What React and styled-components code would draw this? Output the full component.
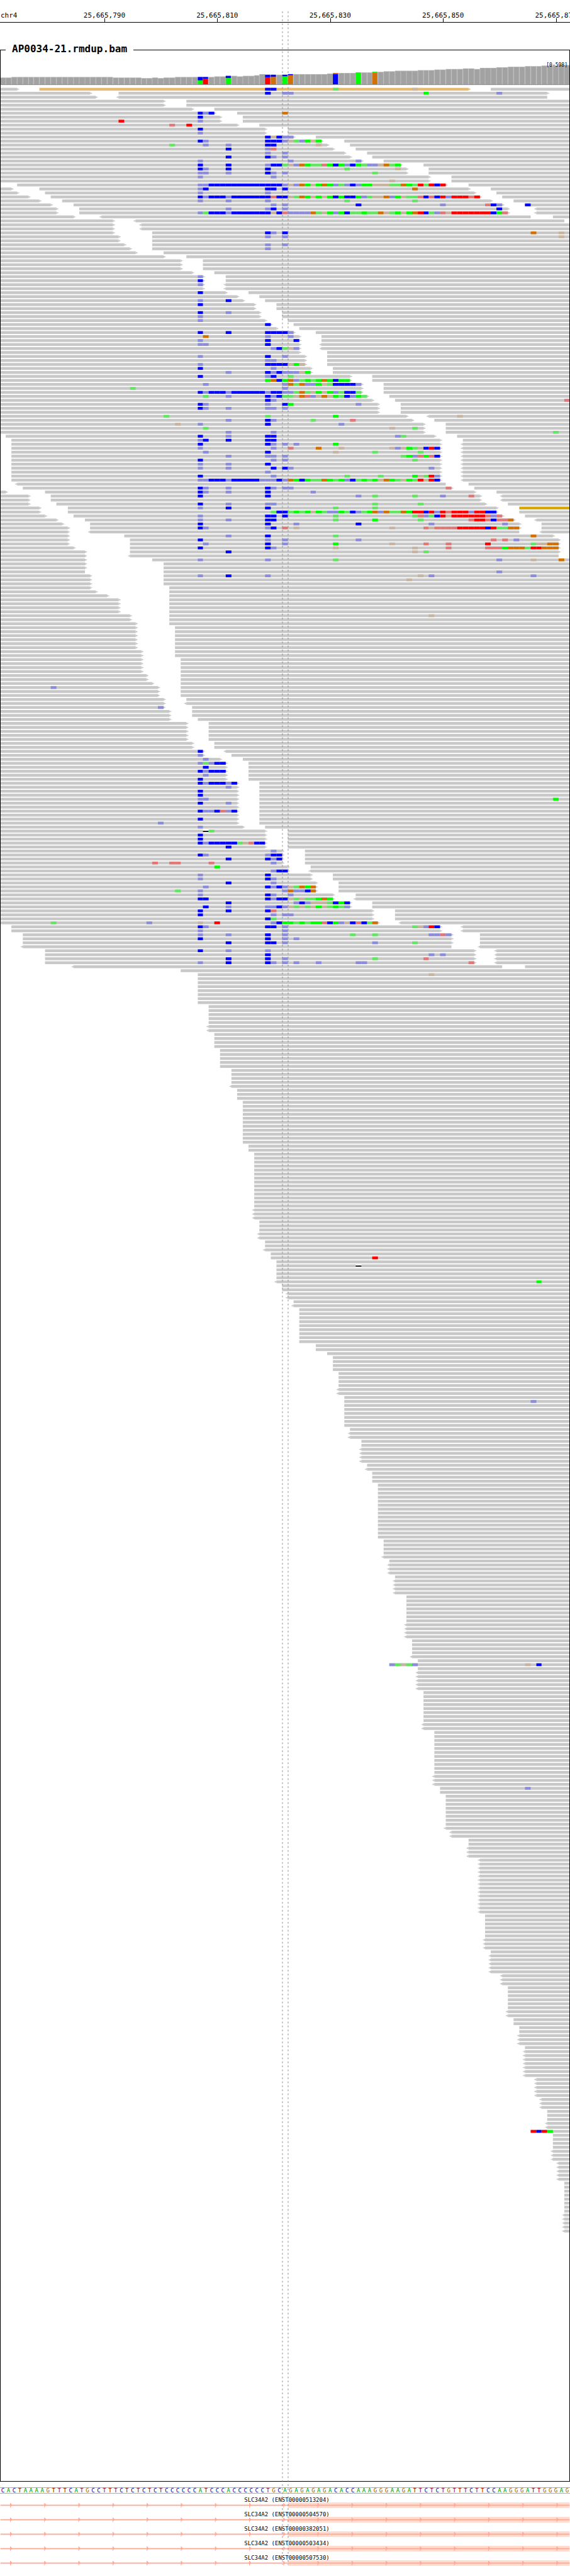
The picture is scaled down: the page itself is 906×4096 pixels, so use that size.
import React from "react";
import styled, { createGlobalStyle } from "styled-components";

const BASES = 101;
const colX = (c) => Math.round((c * 1000) / BASES);

const INK = {
  A: "#009600",
  C: "#000096",
  G: "#a05a00",
  T: "#960000",
};

const MISMATCH = {
  B: "#0000ff",
  b: "#8c8cdc",
  G: "#00ff00",
  g: "#64e664",
  R: "#ff0000",
  r: "#e07878",
  O: "#d27005",
  o: "#c8b4a0",
};

const SEQUENCE =
  "CACTAAAAGTTTCATGCCTTTCTCTCTCTCCCCCCATCCCACCCCCCTGCA" +
  "GAGAGAGACACCAAAGGGAAGATTCTCTGTTTCTTCCAAGGGATTGGGAG";

const TICKS = ["25,665,790", "25,665,810", "25,665,830", "25,665,850", "25,665,870"];

const TRANSCRIPTS = [
  "ENST00000513204",
  "ENST00000504570",
  "ENST00000382051",
  "ENST00000503434",
  "ENST00000507530",
];

/* [number of columns, top of the bar]; the baseline is at 148 */
const COVERAGE = [
  [2, 136], [18, 135], [5, 136], [2, 137], [1, 136], [1, 137], [2, 136], [7, 135],
  [2, 134], [2, 133], [1, 134], [2, 133], [1, 132], [1, 130], [4, 131], [7, 130],
  [1, 129], [4, 128], [3, 127], [2, 126], [2, 125], [4, 124], [3, 123], [2, 122],
  [3, 121], [2, 120], [1, 121], [3, 119], [2, 118], [3, 117], [3, 116], [3, 115],
  [2, 114],
].flatMap(([n, top]) => Array(n).fill(top));

/* column: [upper colour, split, lower colour] */
const VARIANTS = {
  35: ["B", 141, "G"],
  36: ["B", 138, "R"],
  40: ["B", 137, "G"],
  47: ["B", 136, "R"],
  48: ["B", 135, "O"],
  50: ["B", 134, "G"],
  51: ["B", 132, "O"],
  59: ["O", 130, "B"],
  63: ["G", 128, "G"],
  66: ["G", 128, "O"],
};

/*
 * One line for each row of the pileup.
 *   xN        the row is repeated N times
 *   <a-b>     a read from column a to column b, with its strand arrows
 *   P, Y      in front of a read: its insert-size colour
 *   35Bb      mismatches from column 35 on (X is a deletion)
 */
const PILEUP = `
0-3> P7-83> 87- 47BB 59g 73o
0-16> 21-97> 47B 50bb 75G 88b
0-17> <21-97
x2 0-29> 33-
0-34> 38-
0-38> 42- 35BbB 50O
0-39> 43- 35B
0-39> 43- 21R 35b
0-42> 46- 30r 33R
0-47> 51- 35B
0-47> 51- 35b
0-52> 56- 47BoBbb
0-57> 61- 35Bb 47BBBbogbGoG
0-58> 62- 30g 36b 40b 47BB 56o
0-59> 63- 40B 47br
0-61> 65- 47b 50b
0-62> 66- 40B 47Bb 50b
0-64> 68- 35b 51b 63b
0-71> 75- 35B 40B 47bBBgobOGggrGBGbBGgbboOgG
0-72> 76- 35Bb 40B 47B 61g 70o
0-72> 76- 35bb 40b 47Bb 50b 66g
0-76> 80- 35b 48b
0-76> 80- 69o
3-79> 83- 35bbBBBBBBBBBBBBB 50bobOGoGOGbgbBbGGoooggOGgRgRBR
0-2> 7-83> 87- 35bB 47BB 50B 73O
0-3> 8-84> 88- 35b 47b
0-5> 9-85> 89- 35BbBBBb 41BBBBBBBrBB 51ogOGoGoGBGBBGbgooObGoggrBrBRbRRRrR
0-7> 11-87> 91- 35b 40b 47b 61g 73g
0-9> 13-89> 93- 48b 50b 63B 78b 86rBb 93B
0-10> 14-90> <95- 40b 47bB 50b 88B
0-10> 14-90> <95- 35bgBBBb 41BBBBBBBoBr 51bbbbOgoGbGBggGggOogGoGORBgbro 80RRRRRRRBGr
0-13> <18-94 98-
0-20> <24-100
x2 0-20> <25-
0-20> 27- 47Bb 50B 94O 99o
0-21> 27- 47b 50b 99o
0-21> 27-
0-22> 27- 47b 50b
0-23> 27- 47b
0-24> 29-
0-29> 33-
x3 0-32> 36-
0-34> 38-
0-36> 40- 35b
0-36> 40- 35B
0-36> <40- 35b
0-36> <40-
0-40> 44- 35B
0-42> 46-
0-43> 47- 35b 40B
0-45> 49- 35B
0-45> 49-
0-46> 50- 35B 40b
0-46> 50- 35b
0-47> 51- 35b
0-48> 52- 47B
0-49> 53-
0-52> 56- 35B 40B 47BBBBb
0-53> 57- 36O 47b 51b
0-53> 57- 35b 47B 52B
0-53> <57- 35bb 47B
0-53> <57- 48bBgob
0-53> 58-
0-54> 58- 35b 47B 50b
0-54> 58- 47bb
0-54> 58- 35b 47BBBBoGo
0-55> 59- 35B 48b
0-55> 59- 40b 47BbBbbboG
0-62> 66- 35B 47bB 51g
0-62> 66- 47GOBGObgGgGOGBGG
0-64> 68- 36b 50bOgObbGogBBBBb
0-64> 68- 23g 50b
0-64> 68- 35BbBBBb 41BBBBBBbBBbbgOgoGoGbgBBg
0-65> 69- 36g 40b 47BbBggoOrboOoGgBbGg
0-66> 70- 47Bb 100r
0-67> 71- 35Bb 47b 50BG 63b
0-67> 71- 35Bb 40b 47bb 50b
0-67> 71-
0-72> <76- 29g 47g 59G 81o
0-73> 77- 40b 47Bb 55g 62r
0-75> 79- 31o 35b 47B 60b
0-75> 79- 36g 69o 73g
0-75> 79- 40b 48b 98g
1-77> 81- 35B 40b 47BB 70bg
2-78> 82- 35bB 40B 47BB
2-78> <82- 35B 47Bb 50b 52b 59G
2-78> <82- 35b 48b 51r 56O 60o 69oboGgoBRB
2-78> <82- 36b 47B 59o 66g 74g
2-78> <82- 40b 47bb 50b 71gGbrGrB
2-78> <82- 35B 48b 50b 73g
2-78> <82- 35b 40b 47B
2-78> <82- 35b 40b 48B 50Bb 76b
2-78> <82- 47b
2-78> <82- 35B 48b 61g 67g 73GogRb
2-78> <82- 35bbBBBb 41BBBBBbbbBbOGBGggOGgGbBgGgGoOGgoGgRoRB
<3-79 83-
4-80> 84- 35Bb 40b 47Bb 50bb 79r
0-1> 8-84> 88- 35Bb 40b 47B 55b
0-5> 9-85> <89- 35B 47B 63b 66g 73g 78b 83r
0-5> 9-85> <89-
0-5> 10-86> 90- 35B 40b 47bb 66g 74g
0-7> 12-88> Y92- 35b 40B 47B 59g 66g
0-7> 12-88> 92- 48gBB 51gGgGoGgbbGgBbgGObOggOGRRBRbRrRRRbRRBB
0-8> 13-89> 93- 35b 47BB 50B 59g 73grbgBRoRRRRRRrbr
0-10> 15-91> <95- 35b 40b 47BB 59g 66G 74g 83rRRrBrrO
0-11> 16-92> 96- 35B 47B 52b 63B 76b 89b
0-12> 16-92> 96- 35Bb 47bB 50r 52o 69o 75rorrrrRRRRRBRggOO
0-12> <16-92 <96-
0-12> 22-98> 40b 47B 59g 94O
0-12> 23-99> 35B 47b 50b 63b 87r 89r 91b
0-12> 23-99> 36b 47B 50b 59G 69o 75r 79r 86R 94gooOO
0-13> 23-99> 35B 47Bb 59o 73o 79r 86rrrGOOOgRROOO
0-15> 23-99> 40B 73o 75g
0-15> <23-99
0-15> 27- 35b 47b 59g 88b 94o 99O
x2 0-15> 29-
0-15 29- 88b
0-16> 29- 35b 40B 47b 74o 76b 94b
0-16> 29- 72o
0-16> 29-
0-16> 30-
0-17> 30-
0-19> 30-
x4 0-21> 30-
0-23> 30- 76o
0-23> 30-
0-24> 30-
x6 0-24> 31-
x2 0-25> 31-
x4 0-25> 32-
x2 0-26> 32-
0-27> 32-
0-28> 32- 9b
x2 0-28> 32-
0-29> 33-
0-29> <33-
0-29> 34- 28b
x2 0-30> 34-
0-30> 35-
x5 0-33> 37-
x2 0-34> 38-
0-36> <40- 35B
0-36> 41- 35b
0-39> 43- 36b
0-40> 44- 35bgbBB
0-40> 44- 36B
0-40> 44- 35BbBBB
0-40> 44- 36b
0-40> 44- 35B
0-42> 46- 35BbBBBbB
0-42> 46- 40b
x2 0-42> 46- 35B
0-42> 46- 35bb 98G
0-42> 46- 35B 40b
0-42> 46-
0-42> 46- 35BbbBrbB
0-42> 46-
0-42> 46- 35B
0-42> 46- 28b
0-43> 47- 35b
0-47> 51- 36Xg
x2 0-47> 51- 35B
0-47> 51- 35BbBBBBBgorBB
0-47> 51- 40B
0-50> 54- 48b
0-50> 54- 35Bb 47bBB
0-50> 54- 40B 47BbB
0-50> 54- 27r 30rr 37r 48b
0-51> 55- 38G
0-51> <55- 48bBB
0-55> 59- 35b 47B
0-55> 59- 35b 47Bb
0-56> 60- 40B 48b
0-56> 60- 36b 47BbBbogOGO
0-56> 60- 31g 35b 50bObbBO
0-59> 63- 35b 47Bb 51b
0-59> <63- 35BB 47BbBBogoggGOG
0-62> 66- 40B 52bBbooogBGB
0-62> 66- 36B 40b 47bbBbogogoGogGgb
0-66> 70- 35B 40B 47Br
0-66> 70- 35B 48b 50bb
0-66> 70- 47Bg
0-67> <71- 9g 26b 35o 38R 48bBGGgGgGGrBGboBrBgO
2-78> <82- 35Bb 47BB 50b 73gobRB
2-78> <82- 35b 50b
4-80> 85- 35b 40b 47B 50b 62g 66g 76bbrb
4-80> 85- 35B 47B 50b 52b
4-80> 85- 40B 47BB 50b 66b 73g
<4-80 <85-
8-84> <88- 35B 40b 47b
8-84> <88- 47B 76b 78b
8-84> <88- 40B 47B 50b 66g 75r
8-84> <88- 35b 40B 47Bb 50b 52b 56b 63bb 83r
<13-89 93-
32-
35- 76o
x7 35-
x5 37-
x2 <37-
x4 38-
x5 39-
x4 41-
<41-
x3 42-
x11 43-
x2 44-
x14 45-
x3 <45-
x3 46-
x2 <46-
x2 47-
<47-
48-
48- 66R
49-
49- 63X
x3 49-
<49- 95G
x2 50-
x2 <51-
52-
<52-
x9 53-
x2 56-
58-
x4 59-
x4 60-
x2 <60-
61-
61- 94b
x6 61-
62-
x2 <62-
x2 64-
x4 <64-
65-
<65-
x3 66-
x14 67-
x4 68-
<68-
69-
x3 <69-
70-
x4 <70-
x7 72-
x4 <72-
x4 73-
<73-
74-
69- 69bgogb 93o 95B
74-
x5 <74-
x8 75-
x2 <75-
x11 77-
x3 <77-
78- 93b
78-
x8 79-
<79-
x2 <80-
x2 83-
x3 <83-
x14 <85-
x6 86-
x3 <86-
87-
x5 <87-
x3 <89-
x6 90-
x2 <90-
x2 91-
x2 92-
x3 <92-
93-
x7 <93-
x5 <95-
x3 <96-
x3 97-
x2 <97-
94- 94RBRG
x4 98-
x3 <98-
x5 <99-
x8 100-
x5 <100-
`;

const READ_FILL = { "": "#c8c8c8", P: "#e6b970", Y: "#d6a800" };

function parseRow(line) {
  const row = { repeat: 1, reads: [], marks: [] };
  for (const token of line.split(" ")) {
    const repeat = /^x(\d+)$/.exec(token);
    const read = /^([PY]?)(<?)(\d+)-(\d*)(>?)$/.exec(token);
    const marks = /^(\d+)([A-Za-z]+)$/.exec(token);
    if (repeat) {
      row.repeat = Number(repeat[1]);
    } else if (read) {
      row.reads.push({
        fill: READ_FILL[read[1]],
        left: read[2] === "<",
        start: Number(read[3]),
        end: read[4] ? Number(read[4]) : BASES,
        right: read[5] === ">",
      });
    } else if (marks) {
      const first = Number(marks[1]);
      [...marks[2]].forEach((kind, i) => row.marks.push({ col: first + i, kind }));
    }
  }
  return row;
}

const ROWS = PILEUP.trim()
  .split("\n")
  .map(parseRow)
  .flatMap((row) => Array(row.repeat).fill(row));

const GlobalStyle = createGlobalStyle`
  * {
    box-sizing: border-box;
  }
  body {
    margin: 0;
    background: #ffffff;
    color: #000000;
    font-family: "DejaVu Sans Mono", monospace;
  }
`;

const Page = styled.main`
  position: relative;
  width: 100%;
  overflow: hidden;
  padding-bottom: 12px;
`;

const Ruler = styled.header`
  position: relative;
  display: flex;
  height: 36px;
  padding: 19px 0 0 8.416%;
  border-bottom: 1px solid #000000;
  overflow: hidden;
  font-size: 11px;
  line-height: 12px;
`;

const Chromosome = styled.span`
  position: absolute;
  top: 19px;
  left: 1px;
`;

const Tick = styled.span`
  position: relative;
  flex: 0 0 21.622%;
  text-align: center;

  &::after {
    content: "";
    position: absolute;
    bottom: 0;
    left: 50%;
    width: 1px;
    height: 6px;
    background: #000000;
  }
`;

const Track = styled.fieldset`
  position: relative;
  min-width: 0;
  margin: 34px 0 0;
  padding: 0;
  border: 1px solid #000000;
`;

const TrackName = styled.legend`
  margin-left: 8px;
  padding: 0 10px 2px;
  font-size: 16px;
  font-weight: bold;
  line-height: 16px;
`;

const Chart = styled.svg`
  display: block;
  width: 100%;
  height: auto;
`;

const Range = styled.span`
  position: absolute;
  top: 11px;
  right: 3px;
  font-size: 8px;
  line-height: 10px;
`;

const Sequence = styled.div`
  display: grid;
  grid-template-columns: repeat(101, minmax(0, 1fr));
  height: 10px;
  margin-top: 9px;
  border: solid #aaaaaa;
  border-width: 1px 0;
  font-size: 9px;
  line-height: 9px;
  text-align: center;
`;

const Base = styled.span`
  color: ${(p) => INK[p.$base]};
`;

const Transcripts = styled.ul`
  margin: 4px 0 0;
  padding: 0;
  list-style: none;
`;

const Transcript = styled.li`
  height: 23px;
`;

const TranscriptName = styled.div`
  height: 10px;
  padding-left: 6px;
  font-size: 9px;
  line-height: 12px;
  text-align: center;
  white-space: pre;
`;

const Guides = styled.svg`
  position: absolute;
  top: 0;
  left: 0;
  width: 100%;
  height: auto;
  pointer-events: none;
`;

function CoverageBars() {
  return (
    <g>
      {COVERAGE.map((top, c) => {
        const x = colX(c);
        const w = colX(c + 1) - x;
        const variant = VARIANTS[c];
        if (variant) {
          const [upper, split, lower] = variant;
          return (
            <g key={c}>
              <rect x={x} y={top} width={w} height={148 - top} fill="#b4b4b4" />
              <rect x={x} y={top} width={9} height={split - top} fill={MISMATCH[upper]} />
              <rect x={x} y={split} width={9} height={148 - split} fill={MISMATCH[lower]} />
            </g>
          );
        }
        return (
          <g key={c}>
            <rect x={x} y={top} width={w} height={148 - top} fill="#b0b0b0" />
            <rect x={x + 1} y={top + 1} width={w - 2} height={147 - top} fill="#a2a2a2" />
          </g>
        );
      })}
      <rect x={0} y={148} width={1000} height={1} fill="#787878" />
    </g>
  );
}

function Read({ y, read }) {
  const from = colX(read.start);
  const to = colX(read.end);
  return (
    <g fill={read.fill}>
      <rect x={from} y={y} width={to - from} height={5} />
      {read.left && <path d={`M${from} ${y + 1}h-2v1h-2v1h2v1h2z`} />}
      {read.right && <path d={`M${to} ${y + 1}h2v1h2v1h-2v1h-2z`} />}
    </g>
  );
}

function Mark({ y, mark }) {
  const x = colX(mark.col);
  const width = colX(mark.col + 1) - x;
  if (mark.kind === "X") {
    return (
      <g>
        <rect x={x} y={y} width={width} height={5} fill="#ffffff" />
        <rect x={x} y={y + 2} width={width} height={2} fill="#000000" />
      </g>
    );
  }
  return <rect x={x} y={y} width={width} height={5} fill={MISMATCH[mark.kind]} />;
}

function PileupRows() {
  return ROWS.map((row, r) => {
    const y = 154 + 7 * r;
    return (
      <g key={r}>
        {row.reads.map((read) => (
          <Read key={read.start} y={y} read={read} />
        ))}
        {row.marks.map((mark) => (
          <Mark key={mark.col} y={y} mark={mark} />
        ))}
      </g>
    );
  });
}

function GeneModel() {
  const arrows = Array.from({ length: 17 }, (_, i) => 17 + 60 * i);
  return (
    <Chart viewBox="0 0 1000 10" aria-hidden="true">
      <rect x={505} y={0} width={495} height={10} fill="#ffdccd" />
      <rect x={0} y={4} width={1000} height={2} fill="#ffa898" />
      {arrows.map((x) => (
        <path key={x} d={`M${x} 1h1v1h1v1h1v3h-1v1h-1v2h-1z`} fill="#ffa898" />
      ))}
    </Chart>
  );
}

export default function App() {
  return (
    <>
      <GlobalStyle />
      <Page>
        <Ruler>
          <Chromosome>chr4</Chromosome>
          {TICKS.map((label) => (
            <Tick key={label}>{label}</Tick>
          ))}
        </Ruler>

        <Track>
          <TrackName>AP0034-21.rmdup.bam</TrackName>
          <Chart viewBox="1.1 97 997.8 4257" aria-label="Read pileup">
            <CoverageBars />
            <PileupRows />
          </Chart>
          <Range>[0-598]</Range>
        </Track>

        <Sequence>
          {[...SEQUENCE].map((base, i) => (
            <Base key={i} $base={base}>
              {base}
            </Base>
          ))}
        </Sequence>

        <Transcripts>
          {TRANSCRIPTS.map((id) => (
            <Transcript key={id}>
              <TranscriptName>{`SLC34A2 (${id})`}</TranscriptName>
              <GeneModel />
            </Transcript>
          ))}
        </Transcripts>

        <Guides viewBox="0 0 1000 4521" aria-hidden="true">
          <path
            d="M495.5 20V4501M505.5 20V4501"
            fill="none"
            stroke="#828282"
            strokeWidth="1"
            strokeDasharray="3 4"
          />
        </Guides>
      </Page>
    </>
  );
}
